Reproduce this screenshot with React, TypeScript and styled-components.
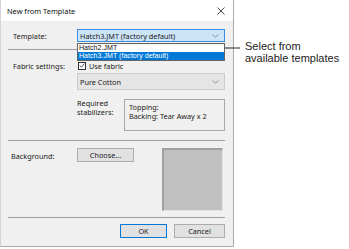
import React from "react";
import styled, { createGlobalStyle } from "styled-components";

const GlobalStyle = createGlobalStyle`
  body {
    margin: 0;
    background: #ffffff;
    font-family: "Noto Sans", "Open Sans", sans-serif;
    font-size: 7.3px;
    color: #1a1a1a;
  }
`;

const Chevron = () => (
  <svg width="7" height="4" viewBox="0 0 7 4">
    <path d="M0.5 0.5 L3.5 3.2 L6.5 0.5" fill="none" stroke="#8a8a8a" strokeWidth="0.9" />
  </svg>
);

export default function App() {
  return (
    <Page>
      <GlobalStyle />
      <Window>
        <TitleBar>
          <Title>New from Template</Title>
          <CloseIcon width="8" height="8" viewBox="0 0 8 8">
            <path d="M0.5 0.5 L7.5 7.5 M7.5 0.5 L0.5 7.5" stroke="#333" strokeWidth="0.9" />
          </CloseIcon>
        </TitleBar>

        <Body>
          <TemplateRow>
            <Label>Template:</Label>
            <ComboWrap>
              <Combo $focused>
                <span>Hatch3.JMT (factory default)</span>
                <Chevron />
              </Combo>
              <DropList>
                <DropItem>Hatch2.JMT</DropItem>
                <DropItem $selected>Hatch3.JMT (factory default)</DropItem>
              </DropList>
            </ComboWrap>
          </TemplateRow>

          <Separator $top={7} />

          <FabricRow>
            <Label>Fabric settings:</Label>
            <FabricColumn>
              <CheckRow>
                <CheckBox>
                  <svg width="7" height="7" viewBox="0 0 7 7">
                    <path d="M1 3.6 L2.8 5.5 L6.2 1.2" fill="none" stroke="#222" strokeWidth="0.9" />
                  </svg>
                </CheckBox>
                <span>Use fabric</span>
              </CheckRow>
              <Combo $tall>
                <span>Pure Cotton</span>
                <Chevron />
              </Combo>
              <StabilizerRow>
                <StabLabel>
                  Required
                  <br />
                  stabilizers:
                </StabLabel>
                <StabBox>
                  Topping:
                  <br />
                  Backing: Tear Away x 2
                </StabBox>
              </StabilizerRow>
            </FabricColumn>
          </FabricRow>

          <Separator $top={9} />

          <BackgroundRow>
            <Label $indent={3} $offset={3}>Background:</Label>
            <Button $width={57}>Choose...</Button>
            <Swatch />
          </BackgroundRow>

          <Separator $top={6} />

          <ButtonRow>
            <Button $width={47} $default>OK</Button>
            <Button $width={51}>Cancel</Button>
          </ButtonRow>
        </Body>
      </Window>

      <Callout>
        <CalloutArrow width="30" height="8" viewBox="0 0 30 8">
          <path d="M3 4 L28 4" stroke="#222" strokeWidth="1" />
          <path d="M0 4 L6 1.5 L6 6.5 Z" fill="#222" />
        </CalloutArrow>
        <CalloutText>
          Select from
          <br />
          available templates
        </CalloutText>
      </Callout>
    </Page>
  );
}

const Page = styled.div`
  position: relative;
  width: 349px;
  height: 249px;
`;

const Window = styled.div`
  width: 234px;
  box-sizing: border-box;
  border-left: 1px solid #d4d4d4;
  border-right: 1px solid #a9a9a9;
  border-bottom: 1px solid #a9a9a9;
  background: #f0f0f0;
`;

const TitleBar = styled.div`
  height: 21px;
  background: #ffffff;
  display: flex;
  align-items: center;
  justify-content: space-between;
  padding: 0 8px 0 6px;
`;

const Title = styled.div`
  font-size: 7.4px;
  color: #111;
`;

const CloseIcon = styled.svg`
  display: block;
`;

const Body = styled.div`
  padding: 8px 8px 8px 7px;
`;

const Label = styled.div<{ $indent?: number; $offset?: number }>`
  width: 69px;
  flex: none;
  box-sizing: border-box;
  padding-left: ${({ $indent }) => ($indent !== undefined ? $indent : 5)}px;
  padding-top: ${({ $offset }) => $offset || 0}px;
`;

const TemplateRow = styled.div`
  display: flex;
  align-items: center;
`;

const ComboWrap = styled.div`
  position: relative;
  width: 148px;
`;

const Combo = styled.div<{ $focused?: boolean; $tall?: boolean }>`
  height: ${({ $tall }) => ($tall ? 17 : 13)}px;
  box-sizing: border-box;
  display: flex;
  align-items: center;
  justify-content: space-between;
  padding: 0 5px 0 2px;
  background: ${({ $focused }) => ($focused ? "#cce4f7" : "#e5e5e5")};
  border: 1px solid ${({ $focused }) => ($focused ? "#3d8ee0" : "#cccccc")};
`;

const DropList = styled.div`
  position: absolute;
  top: 14px;
  left: 0;
  width: 148px;
  box-sizing: border-box;
  border: 1px solid #646464;
  background: #ffffff;
  z-index: 2;
`;

const DropItem = styled.div<{ $selected?: boolean }>`
  height: 8px;
  line-height: 8px;
  padding-left: 1px;
  font-family: "Liberation Sans", Arial, sans-serif;
  font-size: 7.1px;
  background: ${({ $selected }) => ($selected ? "#0078d7" : "#ffffff")};
  color: ${({ $selected }) => ($selected ? "#ffffff" : "#111")};
`;

const Separator = styled.div<{ $top: number }>`
  height: 1px;
  background: #a0a0a0;
  margin-top: ${({ $top }) => $top}px;
`;

const FabricRow = styled.div`
  display: flex;
  padding-top: 11px;
`;

const FabricColumn = styled.div`
  width: 148px;
  display: flex;
  flex-direction: column;
`;

const CheckRow = styled.div`
  display: flex;
  align-items: center;
  gap: 3px;
  height: 9px;
  padding-left: 1px;
  margin-bottom: 3px;
`;

const CheckBox = styled.div`
  width: 8px;
  height: 8px;
  box-sizing: border-box;
  border: 1px solid #333;
  background: #ffffff;
  display: flex;
  align-items: center;
  justify-content: center;
  & svg {
    display: block;
  }
`;

const StabilizerRow = styled.div`
  display: flex;
  justify-content: space-between;
  margin-top: 9px;
`;

const StabLabel = styled.div`
  line-height: 9px;
`;

const StabBox = styled.div`
  width: 101px;
  height: 32px;
  box-sizing: border-box;
  border: 1px solid #a8a8a8;
  padding: 3px 0 0 4px;
  line-height: 8.5px;
`;

const BackgroundRow = styled.div`
  display: flex;
  align-items: flex-start;
  padding-top: 7px;
`;

const Button = styled.div<{ $width: number; $default?: boolean }>`
  width: ${({ $width }) => $width}px;
  height: 14px;
  box-sizing: border-box;
  display: flex;
  align-items: center;
  justify-content: center;
  background: #e1e1e1;
  border: 1px solid ${({ $default }) => ($default ? "#0078d7" : "#adadad")};
`;

const Swatch = styled.div`
  width: 61px;
  height: 63px;
  box-sizing: border-box;
  margin-left: 28px;
  background: #c0c0c0;
  border-top: 2px solid #a0a0a0;
  border-left: 2px solid #a0a0a0;
  border-right: 1px solid #e3e3e3;
  border-bottom: 1px solid #e3e3e3;
`;

const ButtonRow = styled.div`
  display: flex;
  justify-content: flex-end;
  gap: 7px;
  padding-top: 6px;
`;

const Callout = styled.div`
  position: absolute;
  left: 212px;
  top: 40px;
  display: flex;
  align-items: flex-start;
`;

const CalloutArrow = styled.svg`
  display: block;
  margin-top: 4px;
`;

const CalloutText = styled.div`
  font-family: "Liberation Sans", Arial, sans-serif;
  font-size: 11px;
  line-height: 12px;
  color: #222;
  margin-left: 3px;
`;
